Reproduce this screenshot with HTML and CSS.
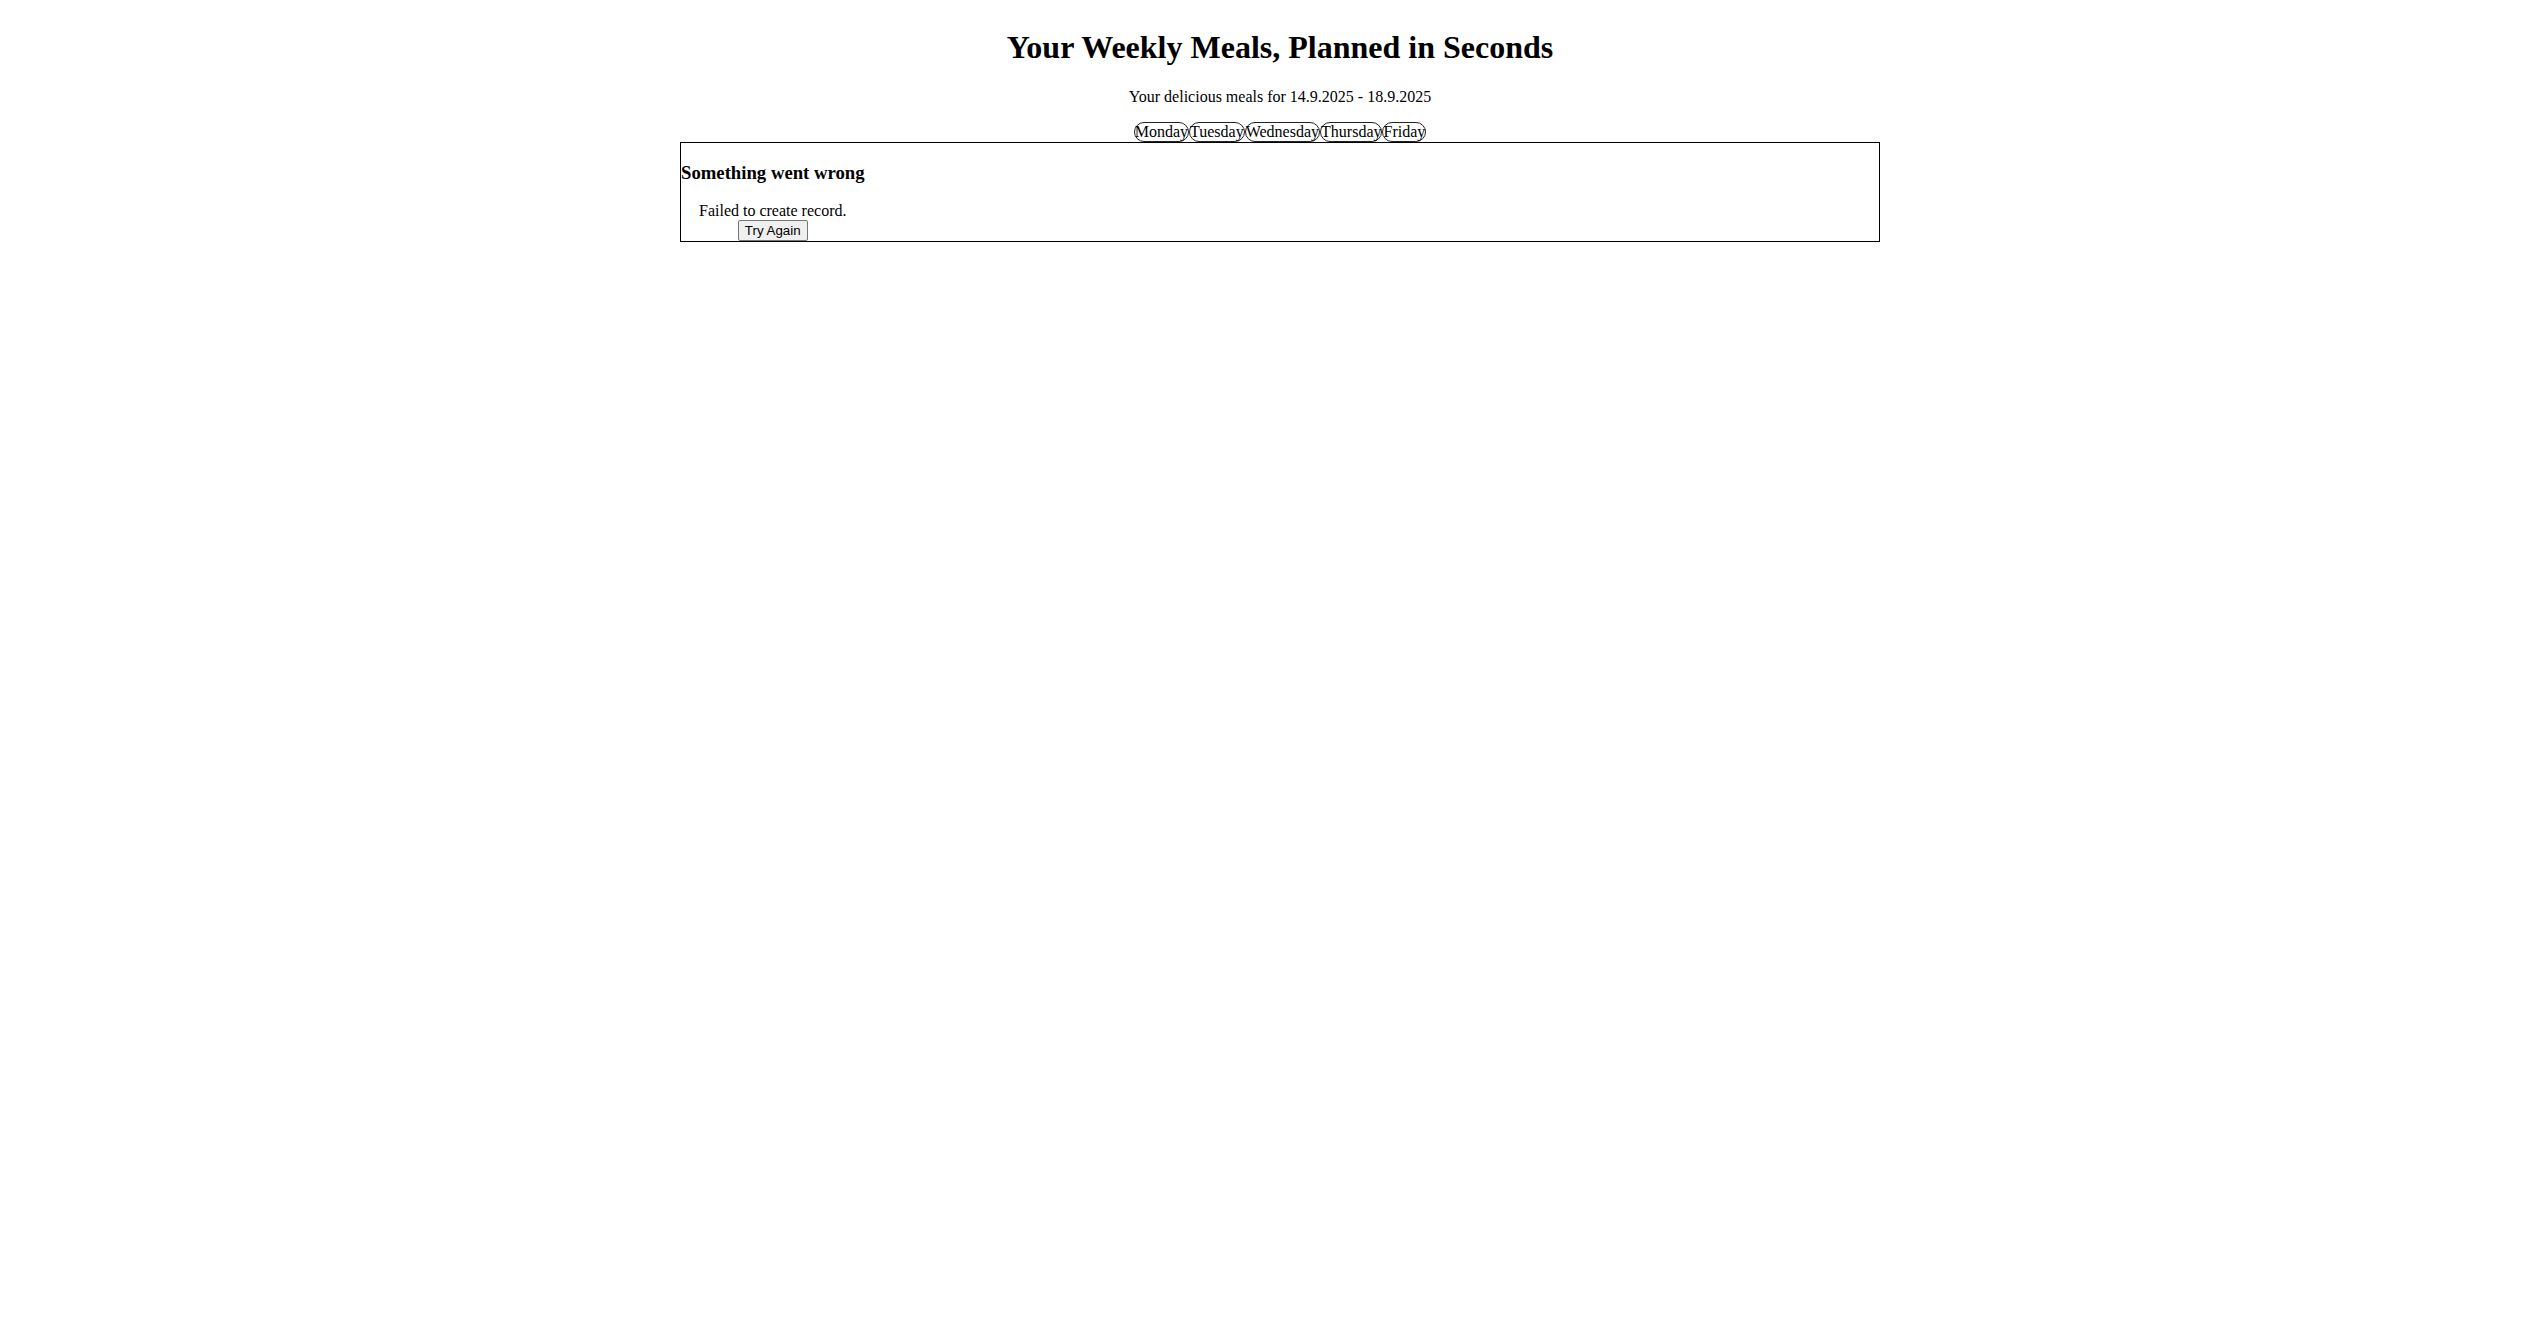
FILE: index.html
```html
<!DOCTYPE html>
<html lang="en">
<head>
<meta charset="utf-8">
<title>Weekly Meals</title>
<link rel="stylesheet" href="styles.css">
</head>
<body>
<div class="app">
  <h1 class="title">Your Weekly Meals, Planned in Seconds</h1>
  <p class="subtitle">Your delicious meals for 14.9.2025 - 18.9.2025</p>
  <div class="days"><button class="day">Monday</button><button class="day">Tuesday</button><button class="day">Wednesday</button><button class="day">Thursday</button><button class="day">Friday</button></div>
  <div class="panel">
    <h3 class="error-title">Something went wrong</h3>
    <div class="error-body">
      <p class="error-msg">Failed to create record.</p>
      <button class="retry">Try Again</button>
    </div>
  </div>
</div>
</body>
</html>
```

FILE: styles.css
```css
body {
  margin: 8px 8px 8px 23px;
  font-family: "Liberation Serif", "Times New Roman", serif;
  font-size: 16px;
  color: #000;
  background: #fff;
}

.app {
  display: flow-root;
  max-width: 1200px;
  margin: 0 auto;
}

.title {
  font-size: 32px;
  font-weight: bold;
  text-align: center;
  margin: 21.44px 0;
}

.subtitle {
  text-align: center;
  margin: 16px 0;
}

.days {
  display: flex;
  justify-content: center;
}

.day {
  font-family: inherit;
  font-size: 16px;
  line-height: normal;
  color: #000;
  background: transparent;
  border: 1px solid #222;
  border-radius: 11px;
  padding: 0;
  margin: 0;
}

.panel {
  border: 1px solid #000;
}

.error-title {
  font-size: 18.72px;
  font-weight: bold;
  margin: 18.72px 0;
}

.error-body {
  display: inline-flex;
  flex-direction: column;
  align-items: center;
  padding-left: 18px;
}

.error-msg {
  margin: 0;
}

.retry {
  font-family: Arial, "Liberation Sans", sans-serif;
  font-size: 13.333px;
  line-height: normal;
  padding: 2px 6px;
  margin: 0;
  border: 1px solid #767676;
  border-radius: 2px;
  background: #efefef;
  color: #000;
}
```
